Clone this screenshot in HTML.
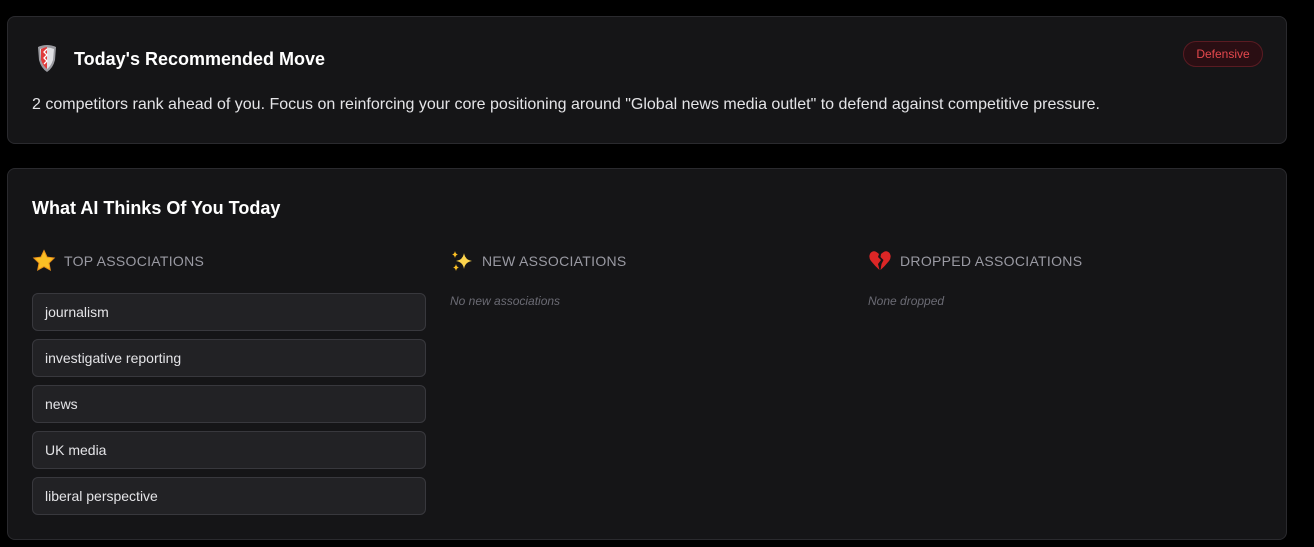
<!DOCTYPE html>
<html><head><meta charset="utf-8"><style>
*{box-sizing:border-box;margin:0;padding:0}
body{width:1314px;height:547px;background:#000;font-family:"Liberation Sans",sans-serif;position:relative;overflow:hidden}
.card{position:absolute;left:7px;width:1280px;background:#151517;border:1px solid #2a2a2e;border-radius:8px}
.c1{top:16px;height:128px}
.c2{top:168px;height:372px}
h2{position:absolute;color:#fff;font-size:18px;font-weight:bold}
.pill{position:absolute;left:1175px;top:24px;width:80px;height:26px;border:1px solid #5a1b22;background:#2a0e13;border-radius:13px;color:#e5484d;font-size:12px;text-align:center;line-height:24px}
.desc{position:absolute;left:24px;top:79px;color:#e4e4e7;font-size:16px}
.col{position:absolute;top:80px;width:394px}
.hd{height:24px;display:flex;align-items:center;color:#9a9aa3;font-size:14px;letter-spacing:.3px}
.hd svg{margin-right:8px}
.item{height:38px;margin-top:8px;background:#222225;border:1px solid #38383d;border-radius:6px;color:#e4e4e7;font-size:14px;padding-left:12px;line-height:36px}
.first{margin-top:20px}
.none{margin-top:21px;color:#6b6b74;font-size:12px;font-style:italic}
</style></head><body>
<div class="card c1">
<svg style="position:absolute;left:28px;top:26px" width="22" height="30" viewBox="0 0 22 30"><path d="M2 4 Q11 0 20 4 L19 17 Q17 25 11 29 Q5 25 3 17Z" fill="#9a9aa0"/><path d="M4 6 Q11 3 18 6 L17 17 Q15 23 11 26 Q7 23 5 17Z" fill="#e0e0e4"/><path d="M5 6 Q8 4.5 11 4 L11 26 Q7 23 5 17Z" fill="#e03a3a"/><path d="M11 6 L8 9 L11 12 L8 15 L11 18 L8 21" stroke="#fff" stroke-width="1.3" fill="none"/></svg>
<h2 style="left:66px;top:32px">Today's Recommended Move</h2>
<div class="pill">Defensive</div>
<div class="desc">2 competitors rank ahead of you. Focus on reinforcing your core positioning around "Global news media outlet" to defend against competitive pressure.</div>
</div>
<div class="card c2">
<h2 style="left:24px;top:29px;font-size:18px">What AI Thinks Of You Today</h2>
<div class="col" style="left:24px">
<div class="hd"><svg width="24" height="24" viewBox="0 0 24 24"><path d="M12 1.5l3.1 6.6 7.1.9-5.2 5 1.3 7.1L12 17.6 5.7 21.1 7 14 1.8 9l7.1-.9z" fill="#fbbf24" stroke="#e8901a" stroke-width="1"/></svg>TOP ASSOCIATIONS</div>
<div class="item first">journalism</div>
<div class="item">investigative reporting</div>
<div class="item">news</div>
<div class="item">UK media</div>
<div class="item">liberal perspective</div>
</div>
<div class="col" style="left:442px">
<div class="hd"><svg width="24" height="24" viewBox="0 0 24 24"><path d="M14 4 Q15 11 22 12 Q15 13 14 20 Q13 13 6 12 Q13 11 14 4Z" fill="#fcd34d"/><path d="M5 2 Q5.5 5 8 5.5 Q5.5 6 5 9 Q4.5 6 2 5.5 Q4.5 5 5 2Z" fill="#fbbf24"/><path d="M6 15 Q6.5 18 9 18.5 Q6.5 19 6 22 Q5.5 19 3 18.5 Q5.5 18 6 15Z" fill="#fbbf24"/></svg>NEW ASSOCIATIONS</div>
<div class="none">No new associations</div>
</div>
<div class="col" style="left:860px">
<div class="hd"><svg width="24" height="24" viewBox="0 0 24 24"><path d="M11 5 Q6 0 2.5 4 Q0 8 3 12 Q7 17 11.5 21 L10 15 L13 11 L10 8Z" fill="#dc2626"/><path d="M13 5 Q18 0 21.5 4 Q24 8 21 12 Q17 17 12.5 21 L13.5 15 L15.5 11 L12.5 8Z" fill="#dc2626"/></svg>DROPPED ASSOCIATIONS</div>
<div class="none">None dropped</div>
</div>
</div>
</body></html>
